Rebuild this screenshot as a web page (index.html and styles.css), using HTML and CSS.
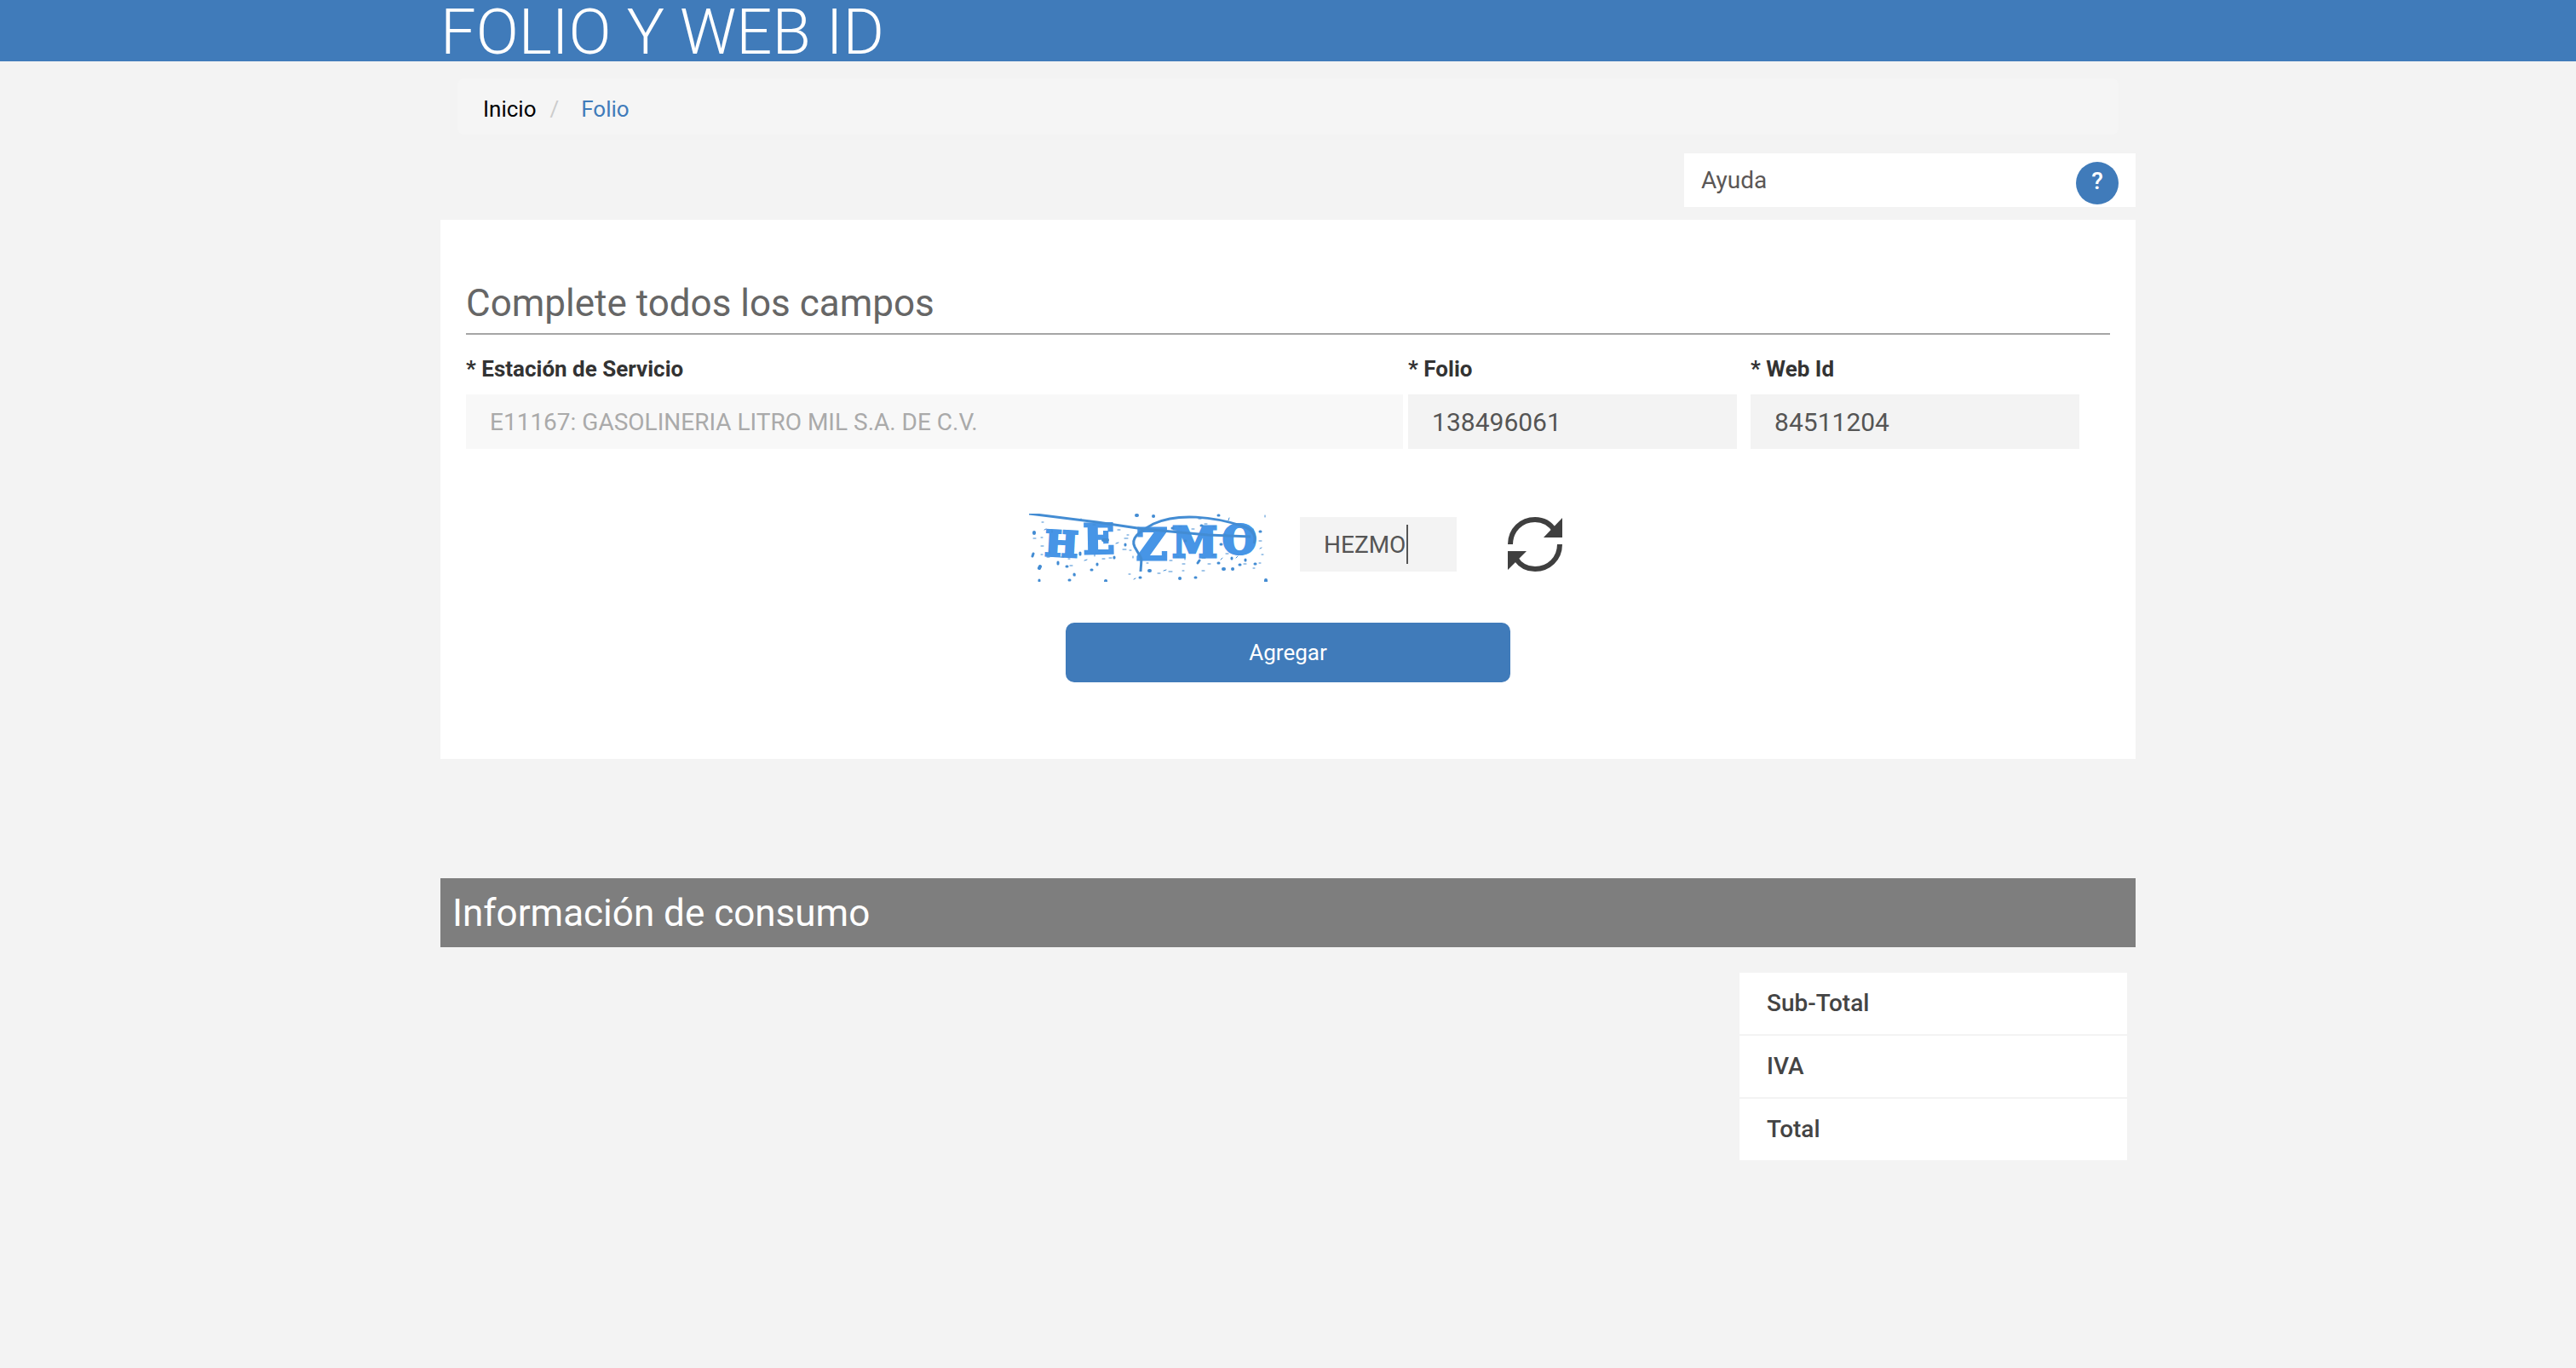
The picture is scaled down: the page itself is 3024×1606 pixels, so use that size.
FILE: index.html
```html
<!DOCTYPE html>
<html lang="es">
<head>
<meta charset="utf-8">
<meta name="viewport" content="width=device-width, initial-scale=1">
<title>Folio y Web ID</title>
<link rel="stylesheet" href="styles.css">
</head>
<body>
<header class="page-header">
  <div class="container"><h1 class="page-title">FOLIO Y WEB ID</h1></div>
</header>
<main class="container">
  <nav class="breadcrumb" aria-label="Ruta">
    <a class="breadcrumb-home" href="#">Inicio</a>
    <span class="breadcrumb-separator">/</span>
    <a class="breadcrumb-current" href="#">Folio</a>
  </nav>
  <div class="help">
    <span class="help-label">Ayuda</span>
    <button class="help-button" type="button">?</button>
  </div>
  <form class="card">
    <h2 class="card-title">Complete todos los campos</h2>
    <div class="fields">
      <div class="field field-station">
        <label for="station">* Estación de Servicio</label>
        <input class="input" id="station" type="text" value="E11167: GASOLINERIA LITRO MIL S.A. DE C.V." disabled>
      </div>
      <div class="field">
        <label for="folio">* Folio</label>
        <input class="input input-number" id="folio" type="text" value="138496061">
      </div>
      <div class="field field-webid">
        <label for="webid">* Web Id</label>
        <input class="input input-number" id="webid" type="text" value="84511204">
      </div>
    </div>
    <div class="captcha">
      <svg class="captcha-image" viewBox="0 0 280 80" role="img" aria-label="Captcha">
        <g class="captcha-letters">
          <text x="18" y="49" font-size="41" transform="rotate(3 18 49)">H</text>
          <text x="64" y="47" font-size="48" transform="rotate(-1 64 47)">E</text>
          <text x="126" y="54" font-size="50">Z</text>
          <text x="168" y="51" font-size="48">M</text>
          <text x="227" y="47" font-size="46">O</text>
        </g>
        <g class="captcha-lines">
          <path d="M0 0L80 10L134 18L210 25L260 27"/>
          <path d="M131 68C132 48 134 57 124 39C119 29 128 22 146 12C174-1 216 3 252 15C264 20 267 27 264 35"/>
        </g>
        <g class="captcha-dots">
          <path d="M126 2h1M146 3h.1M177 76h.1M228 65h1M239 65h.1M141 67h1M90 79h.1M278 78v2M87 31h5M6 22v1M12 64l1-2"/>
          <path class="captcha-dots-medium" d="M202 14h1M168 17h1M265 59h1M44 62h1M73 66h1M198 58l2-3M4 50l1-3M34 57v2M53 71v1M60 46v2M80 59v1M100 51v1M113 36v1M47 78h1M12 78v1M238 52v1M247 60h1M254 54v1M222 58h1M271 21h1M225 36h1M183 32h1M222 2h1M195 75h1M130 75h1"/>
          <path class="captcha-dots-small" d="M15 10h2M61 6v2M75 13h3M18 19l2-1M27 20v2M5 29h3M14 28h2M14 38h3M14 48h2M24 44v3M21 51h3M37 51h4M48 61h3M46 53h2M54 71v2M65 55l3-1M77 48v2M86 53h3M104 19h3M110 42h4M118 43h2M122 50v2M117 71h2M123 77l2-1M138 58h2M151 70h3M158 67l3-1M165 55h3M164 68h4M173 51h3M183 52v2M180 59h3M180 67h2M203 52h4M203 67h3M210 59h3M215 49l3-1M225 54l2-2M243 52l2-2M252 59h3M263 64h2M270 58h2M277 2v2M235 5l-1 3M199 6h3M191 18h3M216 15h2M206 12h3M176 15h3M171 20h2M263 18v3M270 32h3M271 41l2-1M115 25h2M112 29h4M102 35l3-1M94 52h3M228 24h2M231 47h3M273 48h2"/>
        </g>
      </svg>
      <div class="captcha-entry">
        <input class="input" id="captcha" type="text" value="HEZMO" aria-label="Captcha">
        <span class="caret"></span>
      </div>
      <button class="refresh" type="button" aria-label="Actualizar">
        <svg class="refresh-icon" viewBox="0 0 64 64" aria-hidden="true">
          <path class="refresh-arc" d="M3 32C3 15 16 3 32 3C42 3 50 8 55 16"/>
          <path class="refresh-arc" d="M61 32C61 49 48 61 32 61C22 61 14 56 9 48"/>
          <path d="M64 1V24H42ZM0 40H22L0 62Z"/>
        </svg>
      </button>
    </div>
    <button class="submit" type="submit">Agregar</button>
  </form>
  <h2 class="section-title">Información de consumo</h2>
  <table class="totals">
    <tr><th scope="row">Sub-Total</th><td></td></tr>
    <tr><th scope="row">IVA</th><td></td></tr>
    <tr><th scope="row">Total</th><td></td></tr>
  </table>
</main>
</body>
</html>
```
FILE: styles.css
```css
* { box-sizing: border-box; }

body {
  margin: 0;
  background: #f3f3f3;
  color: #333;
  font-family: Roboto, "Liberation Sans", sans-serif;
  font-size: 28px;
  line-height: 40px;
}

button, input { font: inherit; }
h1, h2 { margin: 0; }
a { text-decoration: none; }

.container {
  max-width: 1990px;
  margin: 0 auto;
}

.page-header { background: #407bba; }

.page-title {
  padding-top: 4px;
  color: #fff;
  font-size: 74px;
  font-weight: 300;
  line-height: 68px;
}

.breadcrumb {
  display: flex;
  margin: 20px 20px 22px;
  padding: 16px 30px 10px;
  border-radius: 8px;
  background: #f5f5f5;
  font-size: 26px;
}

.breadcrumb-home { color: #000; }
.breadcrumb-separator { padding: 0 26px 0 16px; color: #ccc; }
.breadcrumb-current { color: #407bba; }

.help {
  display: flex;
  justify-content: space-between;
  width: 530px;
  height: 63px;
  margin: 0 0 15px auto;
  padding: 10px 20px;
  background: #fff;
  color: #5b5756;
}

.help-label { padding-top: 2px; }

.help-button {
  width: 50px;
  height: 50px;
  padding: 0 0 4px;
  border: 0;
  border-radius: 50%;
  background: #407bba;
  color: #fff;
  font-weight: 500;
}

.card {
  padding: 62px 30px 90px;
  background: #fff;
}

.card-title {
  padding: 2px 0 1px;
  border-bottom: 2px solid #a5a5a5;
  color: #666;
  font-size: 44px;
  font-weight: 400;
  line-height: 68px;
}

.fields {
  display: flex;
  gap: 6px;
  padding-top: 20px;
}

.field { width: 20%; }
.field-station { width: 57%; }
.field-webid { margin-left: 10px; }

.field label {
  display: block;
  margin-bottom: 10px;
  font-size: 26px;
  font-weight: 700;
}

.input {
  display: block;
  width: 100%;
  height: 64px;
  padding: 0 28px;
  border: 0;
  border-radius: 0;
  background: #f3f3f3;
  color: #555;
}

.input-number { font-size: 30px; }

.input:disabled {
  background: #f8f8f8;
  color: #aaa;
}

.captcha {
  display: flex;
  justify-content: center;
  align-items: center;
  gap: 38px;
  margin-top: 68px;
  padding-left: 18px;
}

.captcha-image {
  width: 280px;
  height: 80px;
  margin-top: 8px;
}

.captcha-letters {
  fill: #4795e6;
  stroke: #4795e6;
  stroke-width: 3;
  font-family: "DejaVu Serif", serif;
  font-weight: 700;
}

.captcha-lines {
  fill: none;
  stroke: #438cd3;
  stroke-width: 3;
}

.captcha-dots {
  fill: none;
  stroke: #438cd3;
  stroke-width: 4;
  stroke-linecap: round;
}

.captcha-dots-medium { stroke-width: 3; }
.captcha-dots-small { stroke-width: 1; }

.captcha-entry {
  position: relative;
  width: 184px;
}

.caret {
  position: absolute;
  top: 9px;
  left: 125px;
  width: 2px;
  height: 46px;
  background: #555;
}

.refresh {
  width: 64px;
  height: 64px;
  margin-left: 22px;
  padding: 0;
  border: 0;
  background: none;
}

.refresh-icon {
  display: block;
  fill: #3f3f3f;
}

.refresh-arc {
  fill: none;
  stroke: #3f3f3f;
  stroke-width: 6;
}

.submit {
  display: block;
  width: 522px;
  height: 70px;
  margin: 48px auto 0;
  border: 0;
  border-radius: 10px;
  background: #407bba;
  color: #fff;
  font-size: 26px;
}

.section-title {
  margin: 140px 0 30px;
  padding: 8px 14px 7px;
  background: #7e7e7e;
  color: #fff;
  font-size: 44px;
  font-weight: 400;
  line-height: 66px;
}

.totals {
  width: 455px;
  margin: 0 10px 0 auto;
  border-collapse: collapse;
  color: #444;
}

.totals th, .totals td {
  padding: 16px 32px;
  border-bottom: 2px solid #f3f3f3;
  background: #fff;
  font-weight: 500;
  text-align: left;
}
```
